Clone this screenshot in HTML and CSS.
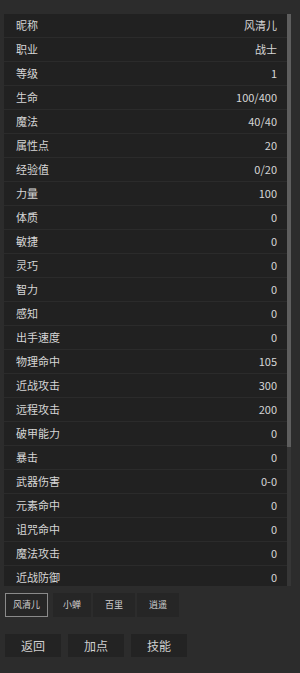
FILE: index.html
```html
<!DOCTYPE html>
<html lang="zh">
<head>
<meta charset="utf-8">
<link rel="stylesheet" href="styles.css">
</head>
<body>
<div class="app">
  <div class="panel">
    <div class="list">
      <div class="row"><span>昵称</span><span>风清儿</span></div>
      <div class="row"><span>职业</span><span>战士</span></div>
      <div class="row"><span>等级</span><span>1</span></div>
      <div class="row"><span>生命</span><span>100/400</span></div>
      <div class="row"><span>魔法</span><span>40/40</span></div>
      <div class="row"><span>属性点</span><span>20</span></div>
      <div class="row"><span>经验值</span><span>0/20</span></div>
      <div class="row"><span>力量</span><span>100</span></div>
      <div class="row"><span>体质</span><span>0</span></div>
      <div class="row"><span>敏捷</span><span>0</span></div>
      <div class="row"><span>灵巧</span><span>0</span></div>
      <div class="row"><span>智力</span><span>0</span></div>
      <div class="row"><span>感知</span><span>0</span></div>
      <div class="row"><span>出手速度</span><span>0</span></div>
      <div class="row"><span>物理命中</span><span>105</span></div>
      <div class="row"><span>近战攻击</span><span>300</span></div>
      <div class="row"><span>远程攻击</span><span>200</span></div>
      <div class="row"><span>破甲能力</span><span>0</span></div>
      <div class="row"><span>暴击</span><span>0</span></div>
      <div class="row"><span>武器伤害</span><span>0-0</span></div>
      <div class="row"><span>元素命中</span><span>0</span></div>
      <div class="row"><span>诅咒命中</span><span>0</span></div>
      <div class="row"><span>魔法攻击</span><span>0</span></div>
      <div class="row"><span>近战防御</span><span>0</span></div>
    </div>
    <div class="scrollbar"><div class="thumb"></div></div>
  </div>
  <div class="tabs">
    <div class="tab tab-active">风清儿</div>
    <div class="tab tab-narrow">小蝉</div>
    <div class="tab">百里</div>
    <div class="tab">逍遥</div>
  </div>
  <div class="actions">
    <div class="btn">返回</div>
    <div class="btn">加点</div>
    <div class="btn">技能</div>
  </div>
</div>
</body>
</html>
```

FILE: styles.css
```css
html, body {
  margin: 0;
  padding: 0;
  background: #2c2c2c;
  height: 100%;
}
body {
  font-family: "Noto Sans CJK SC", "Noto Sans", sans-serif;
  color: #d6d6d6;
}
.app {
  padding: 14px 9px 0 4px;
}
.panel {
  height: 572px;
  display: flex;
  overflow: hidden;
}
.list {
  flex: 1;
  overflow: hidden;
  background: #212121;
}
.scrollbar {
  width: 4px;
  background: #363636;
  display: flex;
  flex-direction: column;
}
.thumb {
  height: 433px;
  background: #5e5e5e;
}
.row {
  height: 23px;
  border-bottom: 1px solid #2b2b2b;
  display: flex;
  justify-content: space-between;
  align-items: center;
  padding: 0 10px 0 12px;
  font-size: 11px;
  line-height: 23px;
  background: #212121;
}
.tabs {
  display: flex;
  gap: 2px;
  margin-top: 7px;
  padding-left: 1px;
}
.tab {
  width: 42px;
  height: 24px;
  box-sizing: border-box;
  display: flex;
  align-items: center;
  justify-content: center;
  font-size: 9px;
  line-height: 12px;
  color: #cfcfcf;
  background: #262626;
}
.tab-narrow {
  width: 38px;
}
.tab-active {
  width: 43px;
  border: 1px solid #8a8a8a;
  margin-right: 3px;
}
.actions {
  display: flex;
  gap: 7px;
  margin-top: 17px;
  padding-left: 1px;
}
.btn {
  width: 56px;
  height: 23px;
  display: flex;
  align-items: center;
  justify-content: center;
  font-size: 12px;
  line-height: 16px;
  color: #d0d0d0;
  background: #232323;
}
```
